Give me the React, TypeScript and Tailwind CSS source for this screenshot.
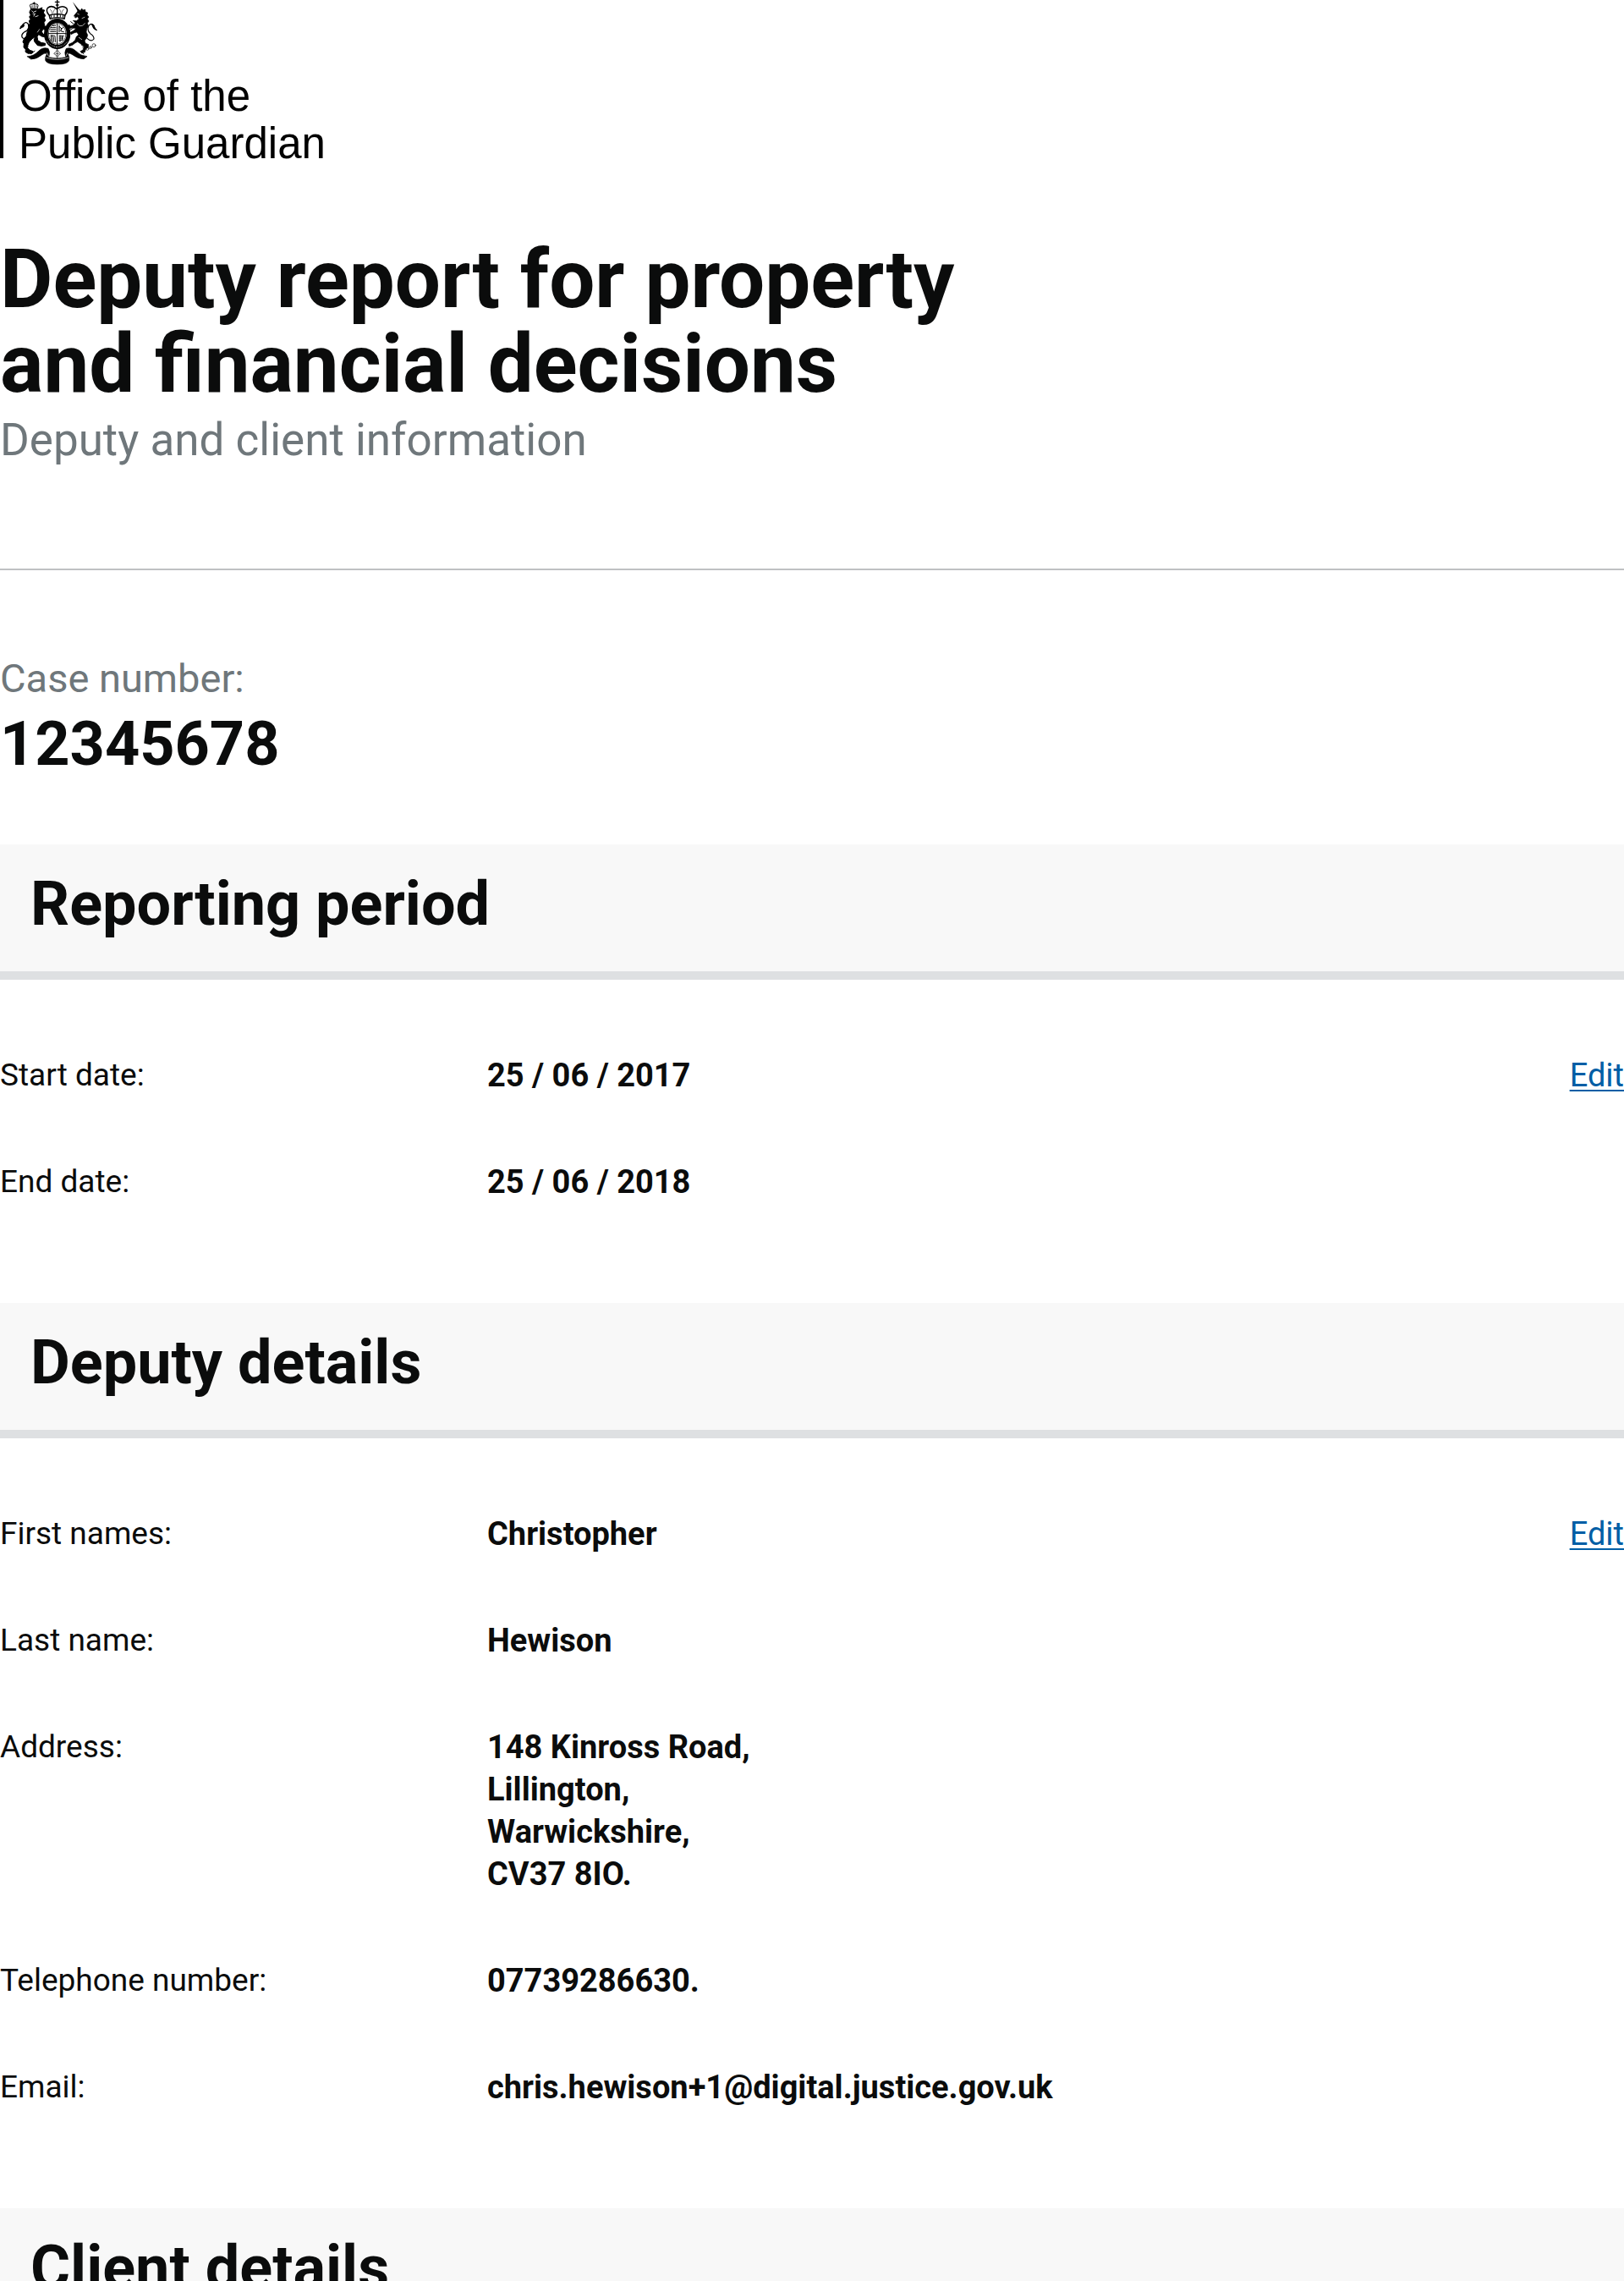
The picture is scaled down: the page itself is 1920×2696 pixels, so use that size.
import type { ReactNode } from "react";

function RoyalArms() {
  return (
    <svg
      viewBox="66 0 282 231"
      className="block h-[77px] w-[94px]"
      fill="#000"
      stroke="none"
      strokeLinecap="round"
      strokeLinejoin="round"
      role="img"
      aria-label="Royal coat of arms"
    >
      {/* lion's crown */}
      <path d="M110 31 L106 19 Q108 13 114 15 Q120 10 126 15 Q134 12 135 20 L132 32 Q121 28 110 31Z" fill="#fff" stroke="#000" strokeWidth="3" />
      <path d="M121 8v8M117 11h8M114 20v7M121 19v7M128 20v7" stroke="#000" strokeWidth="2.5" fill="none" />
      {/* lion's head, mane and body */}
      <path d="M110 33 Q122 28 135 33 L150 27 L147 34 L158 36 L154 45 L161 55 L157 62 L161 72 L156 80 L158 92 L166 95 L170 103 L160 106 L153 103 L148 112 L152 120 L163 124 L160 131 L148 129 L137 122 L132 130 L134 143 L146 151 L161 154 L160 161 L147 163 L133 161 L122 147 L119 133 L111 141 L103 150 L99 160 L98 170 L106 178 L117 182 L114 189 L100 190 L90 184 L91 176 L84 168 L85 155 L81 149 L85 138 L93 128 L97 112 L104 99 L100 90 L106 84 L103 74 L108 68 L104 59 L109 54 L105 44Z" stroke="#000" strokeWidth="3" />
      <path d="M113 39l6 5M121 42l7-3M117 49h8M126 59l9-3M122 52l-2 5" stroke="#fff" strokeWidth="2.5" fill="none" />
      <path d="M121 135l-9 13M140 104l-7 10" stroke="#fff" strokeWidth="2" fill="none" />
      {/* lion's tail */}
      <path d="M88 137 Q75 136 78 123 Q82 114 95 109 Q107 96 99 84 Q92 75 82 86 Q80 95 72 101" fill="none" stroke="#000" strokeWidth="4" />
      <path d="M69 103 Q72 90 83 83 Q91 88 83 97 Q76 99 69 103Z" />

      {/* royal crown */}
      <path d="M174 53 Q161 39 169 28 Q184 16 201 32 Q220 16 236 29 Q243 39 231 53 L228 67 Q203 58 178 67Z" fill="#fff" stroke="#000" strokeWidth="4.5" />
      <path d="M203 0v30M196 7h14M199 18h8M203 31v26M176 54 Q203 45 230 54" fill="none" stroke="#000" strokeWidth="4" />
      <path d="M182 56v6M192 53v7M203 52v7M214 53v7M223 56v6" stroke="#000" strokeWidth="3" />
      <path d="M178 33q6 5 7 15M226 33q-6 5-7 15M194 33q-5 7-5 14M211 33q5 7 5 14" fill="none" stroke="#000" strokeWidth="2" strokeDasharray="2 3" />

      {/* garter */}
      <ellipse cx="203" cy="120" rx="47" ry="54" />
      <ellipse cx="203" cy="120" rx="33" ry="39" fill="#fff" />
      <ellipse cx="203" cy="120" rx="31" ry="37" fill="#fff" stroke="#000" strokeWidth="2" />
      {/* quartered shield */}
      <path d="M203 84v74M172 119h62" stroke="#000" strokeWidth="3" />
      <path d="M181 98h17M179 105h19M179 112h19M187 91h10" stroke="#000" strokeWidth="3" strokeDasharray="6 2" />
      <path d="M211 95l8 7l-4 8l11 3M223 98l-7 6M210 91v22" fill="none" stroke="#000" strokeWidth="3" />
      <path d="M181 125v20M186 125v25M191 132v16M181 127h14l2 22" fill="none" stroke="#000" strokeWidth="2.5" />
      <path d="M210 128h16M210 135h14M210 142h12M213 126v22M221 127v15" fill="none" stroke="#000" strokeWidth="3" />
      <path d="M166 146 Q180 164 203 167 Q226 164 240 146" fill="none" stroke="#fff" strokeWidth="2" strokeDasharray="3 5" />

      {/* unicorn's horn, head and body */}
      <path d="M258 7 L284 39 L277 43Z" />
      <path d="M263 55 L274 42 L279 34 L285 38 L290 30 L294 36 L302 34 L303 42 L311 45 L309 53 L315 60 L310 67 L315 75 L310 82 L314 93 L308 101 L306 114 L311 124 L308 134 L300 144 L303 153 L314 158 L313 168 L304 174 L301 185 L290 188 L286 182 L296 175 L298 164 L287 156 L275 148 L266 153 L257 160 L245 164 L244 157 L257 151 L266 143 L271 130 L279 123 L272 114 L262 117 L252 122 L249 115 L262 108 L269 101 L257 98 L246 101 L239 95 L244 87 L250 92 L260 89 L267 80 L259 73 L271 74 L280 67 L275 59 L268 63Z" stroke="#000" strokeWidth="2" />
      <path d="M275 49l5 2M291 65l9-4M274 84l8 8l10-1l9-8M290 140l-10-7" fill="none" stroke="#fff" strokeWidth="2" />
      <path d="M251 77l9 7M249 106l16-10" stroke="#000" strokeWidth="3" />
      {/* unicorn's tail and chain */}
      <path d="M309 136 Q325 150 333 138 Q334 127 320 119 Q307 107 315 91 Q324 80 332 90 L336 101 L343 107" fill="none" stroke="#000" strokeWidth="3.5" />
      <path d="M323 85 Q334 84 336 95 L344 108 Q331 105 328 95Z" />
      <g fill="none" stroke="#000" strokeWidth="2">
        <circle cx="294" cy="158" r="5" />
        <circle cx="299" cy="169" r="5" />
        <circle cx="310" cy="173" r="5" />
        <circle cx="321" cy="168" r="4" />
        <circle cx="333" cy="161" r="6" />
      </g>

      {/* motto ribbon */}
      <path d="M97 200 Q119 200 137 181 Q151 166 171 172 Q179 185 173 203 Q203 211 233 203 Q227 185 235 172 Q254 166 269 181 Q286 199 309 200 L297 209 Q277 209 257 194 Q248 187 240 190 Q247 201 245 214 Q241 228 203 228 Q165 228 161 214 Q159 201 167 190 Q157 187 149 194 Q130 210 111 210Z" stroke="#000" strokeWidth="2" />
      <path d="M164 204 Q181 211 203 211 Q226 211 242 204M167 188l5 11M239 188l-5 11" fill="none" stroke="#fff" strokeWidth="2" />
      <path d="M109 191l14-10M297 191l-12-9" stroke="#000" strokeWidth="3" />
      {/* pendant */}
      <path d="M203 174 L207 183 L215 190 L207 196 L203 206 L199 196 L191 190 L199 183Z" fill="#fff" stroke="#000" strokeWidth="2" />
      <path d="M203 181v17M198 190h10M180 157l9 9M226 157l-9 9" stroke="#000" strokeWidth="2" />
    </svg>
  );
}

function SectionHeading({ children }: { children: ReactNode }) {
  return (
    <h2 className="border-b-[10px] border-[#dee0e2] bg-[#f8f8f8] pt-[31px] pr-9 pb-[39px] pl-9 text-[72px] leading-[80px] font-bold">
      {children}
    </h2>
  );
}

type Row = { label: string; lines: string[]; editable?: boolean };

function Details({ rows }: { rows: Row[] }) {
  return (
    <table className="mt-[50px] mb-[80px] w-full table-fixed text-left text-[38px] leading-[50px]">
      <tbody>
        {rows.map((row) => (
          <tr key={row.label} className="align-top">
            <th scope="row" className="w-[30%] py-[38px] text-[37px] font-normal">
              {row.label}
            </th>
            <td className="w-3/5 py-[38px] font-bold">
              {row.lines.map((line) => (
                <div key={line}>{line}</div>
              ))}
            </td>
            <td className="py-[38px] text-right">
              {row.editable && (
                <a href="#edit" className="text-[#005ea5] underline decoration-2 underline-offset-4">
                  Edit
                </a>
              )}
            </td>
          </tr>
        ))}
      </tbody>
    </table>
  );
}

const period: Row[] = [
  { label: "Start date:", lines: ["25 / 06 / 2017"], editable: true },
  { label: "End date:", lines: ["25 / 06 / 2018"] },
];

const deputy: Row[] = [
  { label: "First names:", lines: ["Christopher"], editable: true },
  { label: "Last name:", lines: ["Hewison"] },
  { label: "Address:", lines: ["148 Kinross Road,", "Lillington,", "Warwickshire,", "CV37 8IO."] },
  { label: "Telephone number:", lines: ["07739286630."] },
  { label: "Email:", lines: ["chris.hewison+1@digital.justice.gov.uk"] },
];

export default function App() {
  return (
    <div className="bg-white font-['Roboto',sans-serif] text-[#0b0c0c]">
      <header className="flex items-start">
        <div className="h-[187px] w-1 bg-black" />
        <div className="pl-[18px]">
          <RoyalArms />
          <p className="mt-[9px] font-['Liberation_Sans',sans-serif] text-[51px] leading-[56px] text-black">
            Office of the
            <br />
            Public Guardian
          </p>
        </div>
      </header>

      <main>
        <h1 className="mt-[82px] text-[96px] leading-[100px] font-bold">
          Deputy report for property
          <br />
          and financial decisions
        </h1>
        <p className="mt-[10px] text-[53px] leading-[60px] text-[#6f777b]">Deputy and client information</p>

        <hr className="mt-[122px] border-t-2 border-[#bfc1c3]" />

        <p className="mt-[98px] text-[47px] leading-[60px] text-[#6f777b]">Case number:</p>
        <p className="mt-2 mb-[78px] text-[72px] leading-[80px] font-bold">12345678</p>

        <section>
          <SectionHeading>Reporting period</SectionHeading>
          <Details rows={period} />
        </section>
        <section>
          <SectionHeading>Deputy details</SectionHeading>
          <Details rows={deputy} />
        </section>
        <section>
          <SectionHeading>Client details</SectionHeading>
        </section>
      </main>
    </div>
  );
}
